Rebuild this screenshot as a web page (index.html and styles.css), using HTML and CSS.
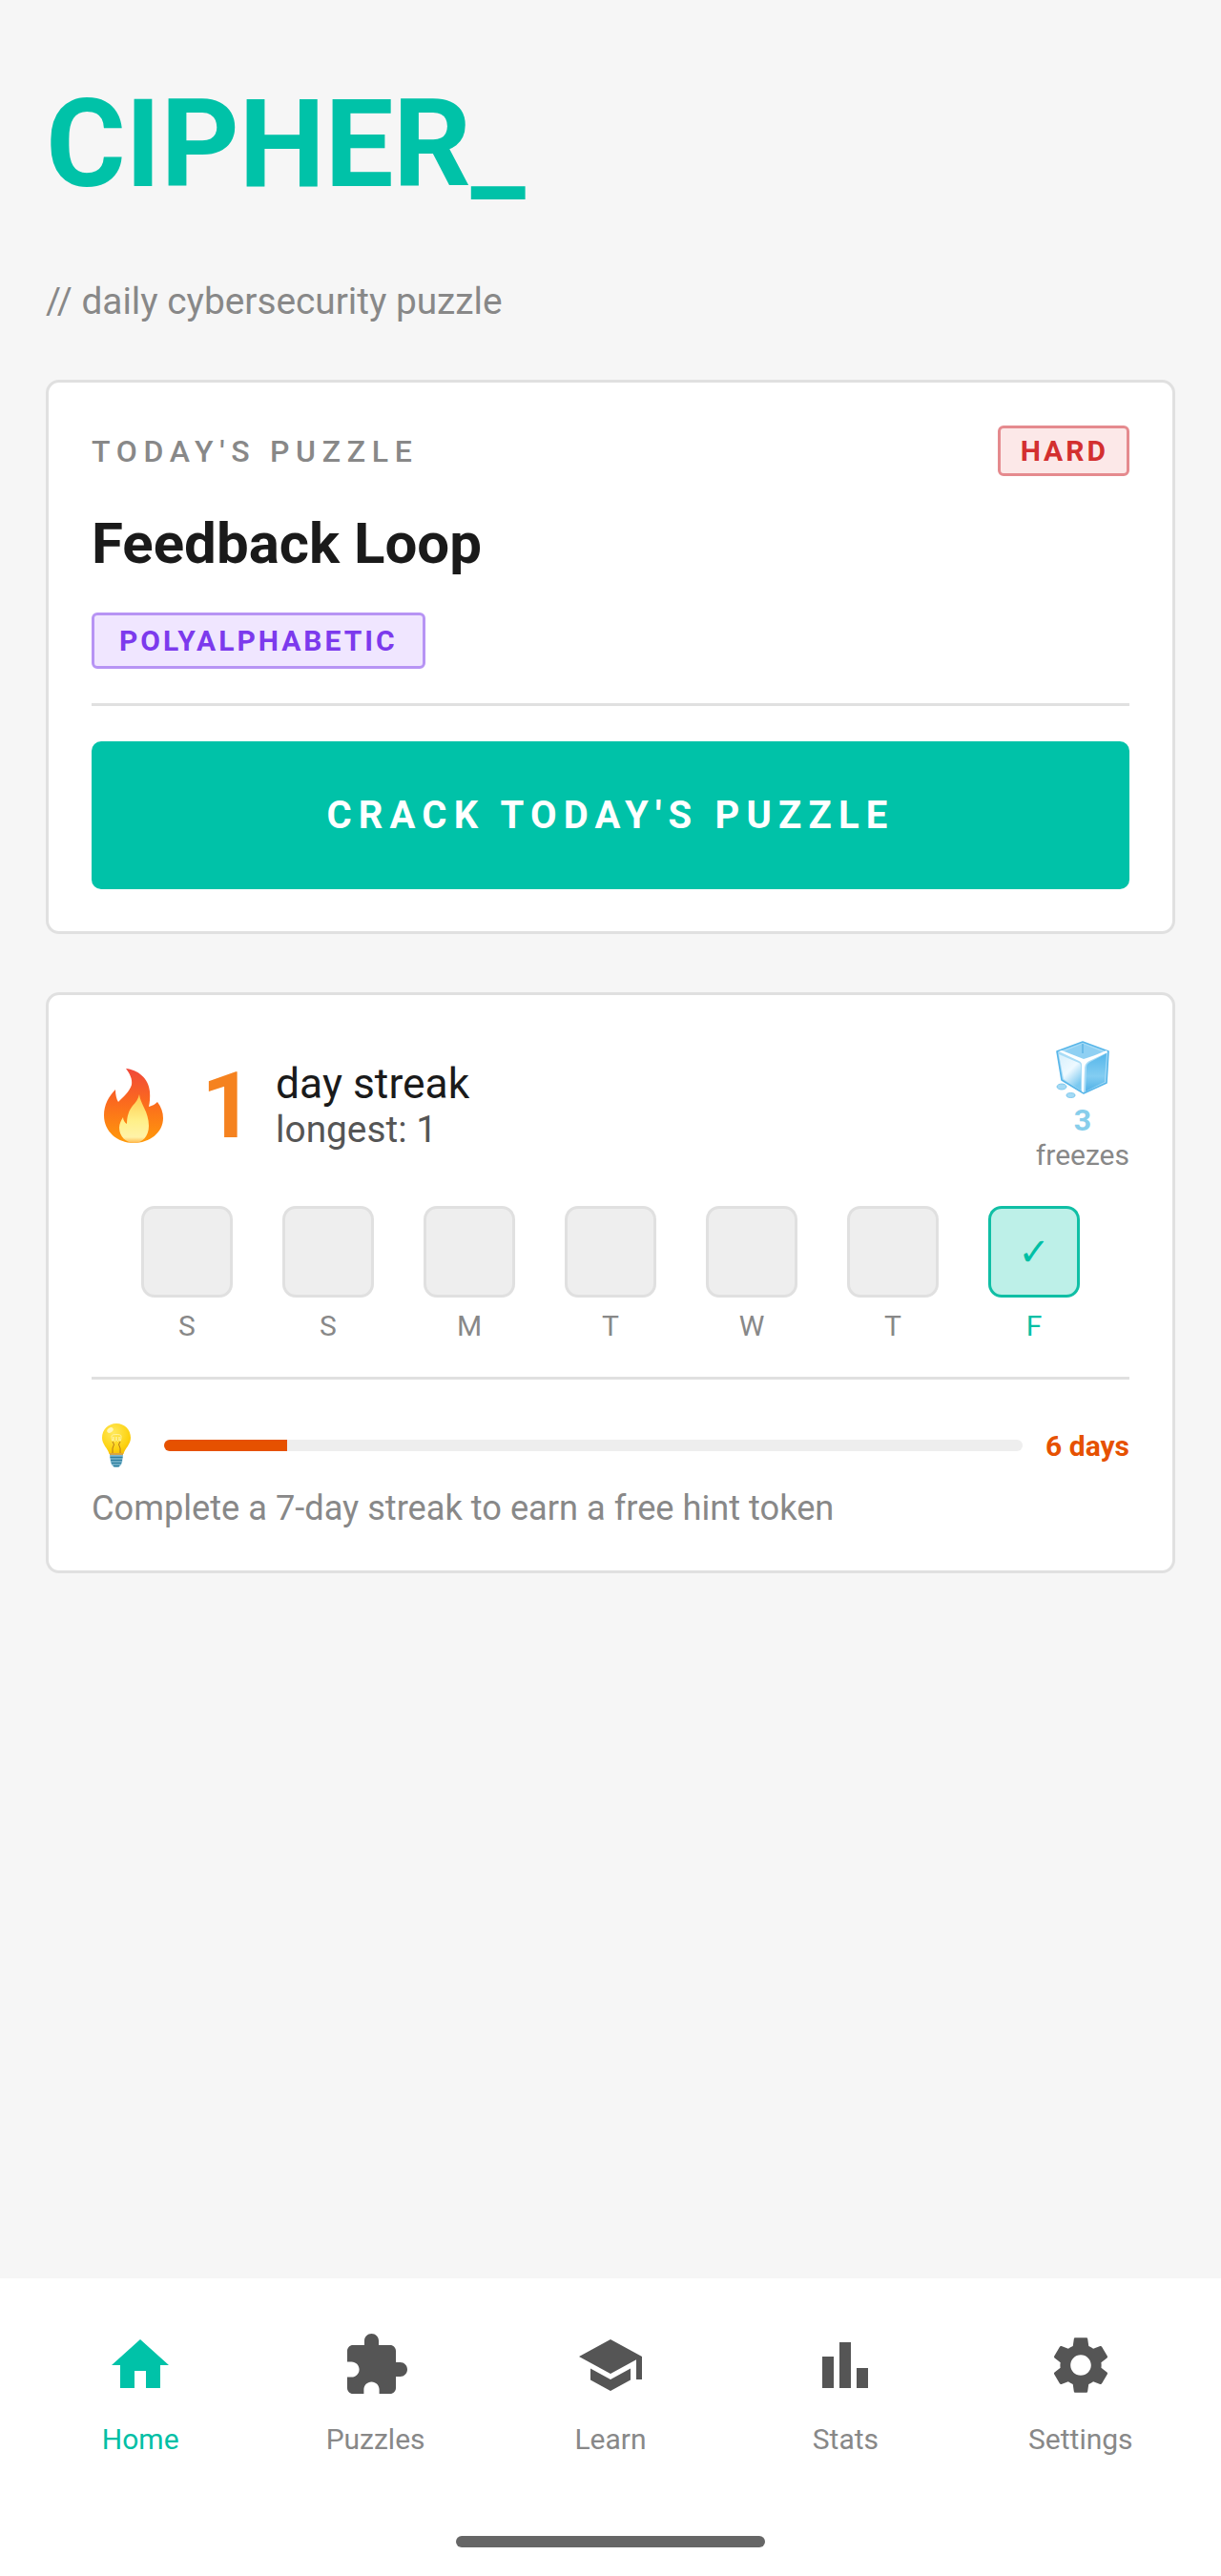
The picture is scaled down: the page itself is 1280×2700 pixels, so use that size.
FILE: index.html
```html
<!DOCTYPE html>
<html lang="en">
<head>
<meta charset="utf-8">
<title>Cipher</title>
<link rel="stylesheet" href="styles.css">
</head>
<body>
<div class="app">
  <main class="main">
    <h1 class="logo">CIPHER_</h1>
    <p class="tagline">// daily cybersecurity puzzle</p>

    <section class="card puzzle-card">
      <div class="puzzle-head">
        <span class="eyebrow">TODAY'S PUZZLE</span>
        <span class="badge badge-hard">HARD</span>
      </div>
      <h2 class="puzzle-title">Feedback Loop</h2>
      <div class="tag-row"><span class="badge badge-type">POLYALPHABETIC</span></div>
      <hr class="divider">
      <button class="cta">CRACK TODAY'S PUZZLE</button>
    </section>

    <section class="card streak-card">
      <div class="streak-row">
        <svg class="flame" viewBox="-13 -4 88 86" aria-hidden="true">
          <defs>
            <linearGradient id="fl" x1="0" y1="0" x2="0" y2="1">
              <stop offset="0" stop-color="#f0483a"/>
              <stop offset=".45" stop-color="#fb6a1e"/>
              <stop offset="1" stop-color="#ff9a0a"/>
            </linearGradient>
            <linearGradient id="fi" x1="0" y1="0" x2="0" y2="1">
              <stop offset="0" stop-color="#ffc94d"/>
              <stop offset=".55" stop-color="#fff08a"/>
              <stop offset=".88" stop-color="#fff3a8"/>
              <stop offset="1" stop-color="#ffb74a"/>
            </linearGradient>
          </defs>
          <path fill="url(#fl)" d="M23 0C35 1 47 10 48 24C48.500 30 48 36 47 40C51 39 54 37 56 35C60 40 62 46 62 52C62 67 48 78 31 78C14 78 0 66 0 49C0 38 5 29 12 22C12 27 13 32 15 35C20 30 27 24 29 17C30 11 27 5 23 0Z"/>
          <path fill="url(#fi)" d="M37 27C38 37 47 45 47 60C47 71 40 78 32 78C23 78 16 71 16 62C16 58 18 54 20 51C20 54 22 57 24 58C24 50 26 44 30 39C33 36 36 32 37 27Z"/>
        </svg>
        <span class="streak-count">1</span>
        <div class="streak-text">
          <span class="streak-label">day streak</span>
          <span class="streak-longest">longest: 1</span>
        </div>
        <div class="freezes">
          <svg class="cube" viewBox="0 -3 56 66" aria-hidden="true">
            <defs>
              <linearGradient id="cl" x1="0" y1="0" x2=".6" y2="1">
                <stop offset="0" stop-color="#d8f0fc"/>
                <stop offset=".55" stop-color="#eef9ff"/>
                <stop offset="1" stop-color="#7cc9f0"/>
              </linearGradient>
              <linearGradient id="cr" x1="0" y1="0" x2="0" y2="1">
                <stop offset="0" stop-color="#55b6ea"/>
                <stop offset=".6" stop-color="#83cdf2"/>
                <stop offset="1" stop-color="#4fb0e6"/>
              </linearGradient>
            </defs>
            <path fill="#a9dcf6" stroke="#58b6e9" stroke-width="1.600" stroke-linejoin="round" d="M28 1L55 11L53 44L29 55L6 41L1 11Z"/>
            <path fill="#8fd0f3" d="M28 3L50 12L30 21L6 12Z"/>
            <path fill="#fff" d="M3 11L6 10L29 19C36 17 44 14 53 10L54 12L35 21C31 23 30 26 30 30L29 54L27 53L27 25C27 23 26 22 24 21Z"/>
            <path fill="url(#cl)" d="M3 14L24 23C26 24 26 25 26 27L26 52L8 40Z"/>
            <path fill="url(#cr)" d="M53 13L51 43L31 53L32 29C32 25 33 24 36 22Z"/>
            <path fill="#45a6de" d="M27 3H29V13H27Z" opacity=".5"/>
            <ellipse cx="6" cy="48" rx="5" ry="3" fill="#a5daf5" stroke="#6cc0ea" stroke-width=".8"/>
            <ellipse cx="15.500" cy="57" rx="4.500" ry="2.500" fill="#a5daf5" stroke="#6cc0ea" stroke-width=".8"/>
          </svg>
          <span class="freeze-count">3</span>
          <span class="freeze-label">freezes</span>
        </div>
      </div>

      <div class="week">
        <div class="day"><div class="day-box"></div><span class="day-name">S</span></div>
        <div class="day"><div class="day-box"></div><span class="day-name">S</span></div>
        <div class="day"><div class="day-box"></div><span class="day-name">M</span></div>
        <div class="day"><div class="day-box"></div><span class="day-name">T</span></div>
        <div class="day"><div class="day-box"></div><span class="day-name">W</span></div>
        <div class="day"><div class="day-box"></div><span class="day-name">T</span></div>
        <div class="day day-done"><div class="day-box">✓</div><span class="day-name">F</span></div>
      </div>

      <hr class="divider divider-week">

      <div class="hint-row">
        <span class="bulb-wrap">
          <svg class="bulb" viewBox="0 0 30 46" aria-hidden="true">
            <defs>
              <radialGradient id="bg" cx=".4" cy=".3" r=".8">
                <stop offset="0" stop-color="#ffe95c"/>
                <stop offset=".7" stop-color="#fdd20f"/>
                <stop offset="1" stop-color="#f5b800"/>
              </radialGradient>
            </defs>
            <path fill="url(#bg)" d="M15 0C23.500 0 30 6.500 30 15C30 22 24 26 22.500 32H7.500C6 26 0 22 0 15C0 6.500 6.500 0 15 0Z"/>
            <ellipse cx="8.500" cy="7" rx="3.500" ry="2.500" fill="#fff6b8" transform="rotate(-35 8.500 7)"/>
            <path fill="none" stroke="#fff3a0" stroke-width="1" d="M10 13C10 20 12 20 12 14C12 20 15 20 15 14C15 20 18 20 18 14C18 20 20 20 20 13C20 11 10 11 10 13Z"/>
            <path fill="none" stroke="#b8791a" stroke-width="1" d="M11 31V26L12.500 22L11 19M19 31V26L17.500 22L19 19"/>
            <path fill="#d9a441" d="M8 31H22V33H8Z"/>
            <path fill="#7fb8cf" d="M8 33H22L21 41C20 44 18 46 15 46C12 46 10 44 9 41Z"/>
            <path fill="none" stroke="#2f7f9f" stroke-width="1.500" d="M8.500 35.500H21.500M9 38.500H21M10 41.500H20M12 44.500H18"/>
          </svg>
        </span>
        <div class="track"><div class="track-fill" style="width:14.2857%"></div></div>
        <span class="hint-days">6 days</span>
      </div>
      <p class="hint-note">Complete a 7-day streak to earn a free hint token</p>
    </section>
  </main>

  <nav class="nav">
    <div class="nav-items">
      <div class="nav-item nav-active">
        <svg class="nav-icon" viewBox="0 0 24 24"><path d="M10 20v-6h4v6h5v-8h3L12 3 2 12h3v8z"/></svg>
        <span class="nav-label">Home</span>
      </div>
      <div class="nav-item">
        <svg class="nav-icon" viewBox="0 0 24 24"><path d="M20.500 11H19V7c0-1.100-.9-2-2-2h-4V3.500C13 2.120 11.880 1 10.500 1S8 2.120 8 3.500V5H4c-1.100 0-1.990.9-1.990 2v3.800H3.500c1.490 0 2.700 1.210 2.700 2.700s-1.210 2.700-2.700 2.700H2V20c0 1.100.9 2 2 2h3.800v-1.500c0-1.490 1.210-2.700 2.700-2.700 1.490 0 2.700 1.210 2.700 2.700V22H17c1.100 0 2-.9 2-2v-4h1.500c1.380 0 2.500-1.120 2.500-2.500S21.880 11 20.500 11z"/></svg>
        <span class="nav-label">Puzzles</span>
      </div>
      <div class="nav-item">
        <svg class="nav-icon" viewBox="0 0 24 24"><path d="M5 13.180v4L12 21l7-3.820v-4L12 17l-7-3.820zM12 3L1 9l11 6 9-4.910V17h2V9L12 3z"/></svg>
        <span class="nav-label">Learn</span>
      </div>
      <div class="nav-item">
        <svg class="nav-icon" viewBox="0 0 24 24"><path d="M4 9h4v11H4zm12 4h4v7h-4zm-6-9h4v16h-4z"/></svg>
        <span class="nav-label">Stats</span>
      </div>
      <div class="nav-item">
        <svg class="nav-icon" viewBox="0 0 24 24"><path d="M19.140 12.940c.04-.3.06-.61.06-.94 0-.32-.02-.64-.07-.94l2.030-1.580c.18-.14.23-.41.12-.61l-1.920-3.320c-.12-.22-.37-.29-.59-.22l-2.390.96c-.5-.38-1.030-.7-1.620-.94l-.36-2.540c-.04-.24-.24-.41-.48-.41h-3.840c-.24 0-.43.17-.47.41l-.36 2.540c-.59.24-1.130.57-1.620.94l-2.390-.96c-.22-.08-.47 0-.59.22L2.740 8.870c-.12.21-.08.47.12.61l2.030 1.580c-.05.3-.09.63-.09.94s.02.64.07.94l-2.030 1.580c-.18.14-.23.41-.12.61l1.920 3.320c.12.22.37.29.59.22l2.390-.96c.5.38 1.030.7 1.620.94l.36 2.540c.05.24.24.41.48.41h3.840c.24 0 .44-.17.47-.41l.36-2.540c.59-.24 1.130-.56 1.620-.94l2.390.96c.22.08.47 0 .59-.22l1.920-3.320c.12-.22.07-.47-.12-.61l-2.010-1.580zM12 15.600c-1.980 0-3.600-1.620-3.600-3.600s1.620-3.600 3.600-3.600 3.600 1.620 3.600 3.600-1.620 3.600-3.600 3.600z"/></svg>
        <span class="nav-label">Settings</span>
      </div>
    </div>
    <div class="home-bar"></div>
  </nav>
</div>
</body>
</html>
```

FILE: styles.css
```css
* { box-sizing: border-box; }
html, body { margin: 0; padding: 0; }
body { background: #f6f6f6; font-family: Roboto, "Liberation Sans", sans-serif; }

.app { width: 1280px; height: 2700px; display: flex; flex-direction: column; }
.main { flex: 1; padding: 76px 48px 0; }

.logo { margin: 0; font-size: 128px; line-height: 150px; font-weight: 700; color: #00c2a8; letter-spacing: -0.4px; }
.tagline { margin: 66px 0 58px; font-size: 38.8px; line-height: 48px; color: #888; font-weight: 400; }

.card { background: #fff; border: 3px solid #e0e0e0; border-radius: 14px; padding: 45px; }
.puzzle-card { padding-bottom: 44px; margin-bottom: 61px; }
.streak-card { padding-bottom: 43px; }

.puzzle-head { display: flex; justify-content: space-between; align-items: center; }
.eyebrow { font-size: 32px; font-weight: 500; letter-spacing: 6.7px; color: #888; }
.badge { display: inline-block; border: 3px solid; border-radius: 6px; font-size: 30px; font-weight: 700; letter-spacing: 3px; white-space: nowrap; }
.badge-hard { height: 53px; line-height: 47px; padding: 0 19px 0 21px; color: #d32f2f; background: #fce8e8; border-color: #e58a8e; }
.badge-type { height: 59px; line-height: 53px; padding: 0 26px; color: #7c3aed; background: #f0e6ff; border-color: #b794f4; }

.puzzle-title { margin: 35px 0 36px; font-size: 60px; line-height: 72px; font-weight: 700; color: #1a1a1a; }
.tag-row { display: flex; }

.divider { margin: 36px 0 37px; height: 3px; border: 0; background: #e0e0e0; }
.cta { display: block; width: 100%; height: 155px; border: 0; border-radius: 10px; background: #00c2a8; color: #fff; font-family: inherit; font-size: 40px; font-weight: 700; letter-spacing: 7.2px; }

.streak-row { display: flex; align-items: center; gap: 24px; }
.flame { width: 88px; height: 86px; flex: none; margin-right: 3px; }
.streak-count { font-size: 96px; line-height: 112px; font-weight: 700; color: #f5821f; margin-right: -1px; }
.streak-text { display: flex; flex-direction: column; }
.streak-label { font-size: 44.4px; line-height: 50px; color: #1a1a1a; }
.streak-longest { font-size: 38.8px; line-height: 46px; color: #555; }
.freezes { margin-left: auto; display: flex; flex-direction: column; align-items: center; }
.cube { width: 56px; height: 66px; display: block; }
.freeze-count { margin-top: 2px; font-size: 32px; line-height: 36px; font-weight: 700; color: #87ceeb; }
.freeze-label { margin-top: 1px; font-size: 30px; line-height: 36px; color: #888; }

.week { margin-top: 35px; display: flex; justify-content: space-evenly; }
.day { width: 96px; display: flex; flex-direction: column; align-items: center; }
.day-box { width: 96px; height: 96px; border: 3px solid #e0e0e0; border-radius: 14px; background: #eee; display: flex; align-items: center; justify-content: center; font-family: "DejaVu Sans", sans-serif; font-size: 40px; color: #00bfa5; }
.day-name { margin-top: 13px; font-size: 30px; line-height: 34px; color: #888; }
.day-done .day-box { background: #bdf0e8; border-color: #10bfa5; }
.day-done .day-name { color: #00bfa5; }

.divider-week { margin: 36px 0 45px; }

.hint-row { display: flex; align-items: center; gap: 24px; height: 48px; }
.bulb-wrap { width: 52px; display: flex; justify-content: center; flex: none; }
.bulb { width: 30px; height: 46px; display: block; }
.track { flex: 1; height: 12px; border-radius: 6px; background: #eee; overflow: hidden; }
.track-fill { height: 100%; background: #e65100; }
.hint-days { font-size: 30px; font-weight: 700; color: #e65100; }
.hint-note { margin: 20px 0 0; font-size: 36.2px; line-height: 44px; color: #888; }

.nav { height: 312px; background: #fff; display: flex; flex-direction: column; align-items: center; }
.nav-items { width: 100%; padding: 55px 24px 0; display: flex; }
.nav-item { flex: 1; display: flex; flex-direction: column; align-items: center; color: #888; }
.nav-icon { width: 72px; height: 72px; display: block; fill: #555; }
.nav-label { margin-top: 24px; font-size: 30px; line-height: 36px; }
.nav-active { color: #00bfa5; }
.nav-active .nav-icon { fill: #00c2a8; }
.home-bar { margin-top: 83px; width: 324px; height: 12px; border-radius: 6px; background: #666; }
```
